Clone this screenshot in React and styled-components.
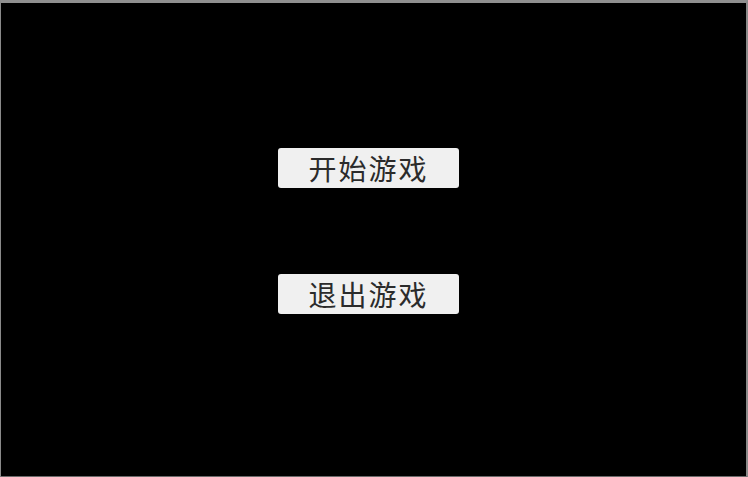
import React from "react";
import styled, { createGlobalStyle } from "styled-components";

const Global = createGlobalStyle`
  html, body { margin: 0; padding: 0; background: #000; }
  #root { width: 748px; height: 477px; }
`;

const Frame = styled.div`
  box-sizing: border-box;
  width: 748px;
  height: 477px;
  background: #000;
  border-top: 3px solid #8f8f8f;
  border-left: 1px solid #8a8a8a;
  border-right: 2px solid #8a8a8a;
  border-bottom: 1px solid #6a6a6a;
  display: flex;
  flex-direction: column;
  align-items: center;
  padding: 145px 10px 0 0;
  gap: 86px;
`;

const MenuButton = styled.button`
  box-sizing: border-box;
  width: 181px;
  height: 40px;
  margin: 0;
  padding: 0 0 1px 0;
  border: none;
  border-radius: 3px;
  background: #f0f0f0;
  color: #2b2b2b;
  font-family: "Noto Sans CJK SC", "Noto Sans", sans-serif;
  font-size: 28px;
  line-height: 1;
  letter-spacing: 2px;
  display: flex;
  align-items: center;
  justify-content: center;
  cursor: pointer;
`;

export default function App() {
  return (
    <>
      <Global />
      <Frame>
        <MenuButton>开始游戏</MenuButton>
        <MenuButton>退出游戏</MenuButton>
      </Frame>
    </>
  );
}
